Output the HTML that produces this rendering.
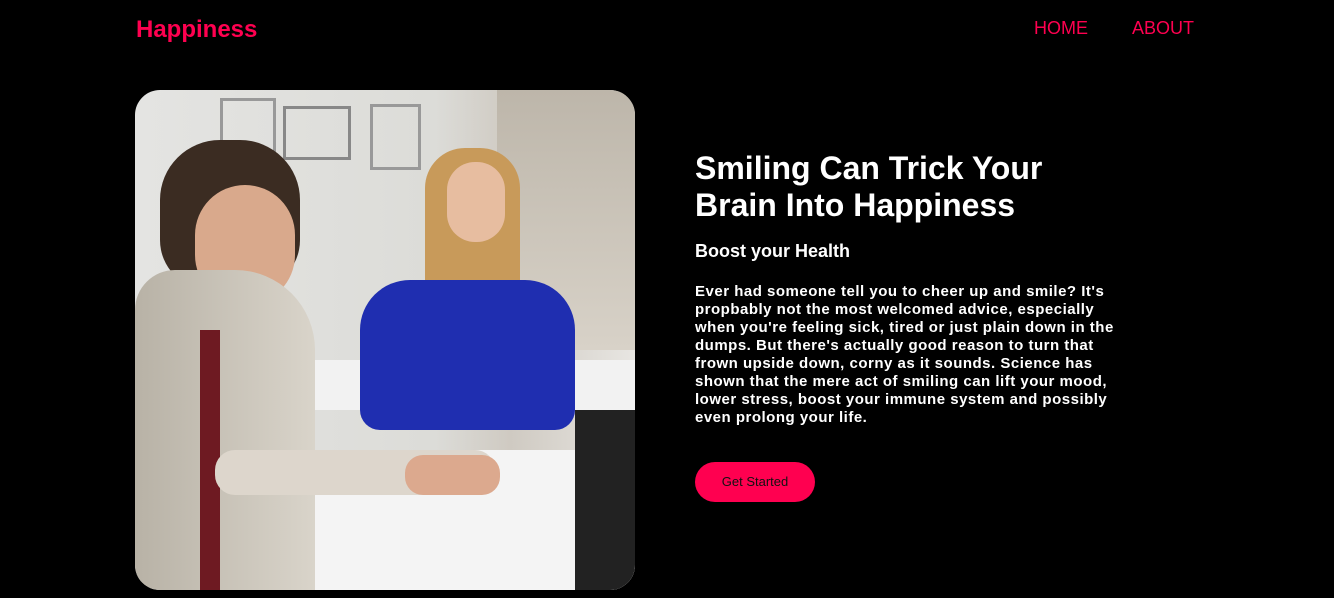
<!DOCTYPE html>
<html><head><style>
body{margin:0;background:#000;width:1334px;height:598px;overflow:hidden;font-family:"Liberation Sans",Arial,sans-serif;position:relative}
.logo{position:absolute;left:136px;top:16px;color:#ff0050;font-weight:bold;font-size:24px}
.nav{position:absolute;top:18px;color:#ff0050;font-size:18px}
.photo{position:absolute;left:135px;top:90px;width:500px;height:500px;border-radius:25px;overflow:hidden;background:linear-gradient(90deg,#e4e4e2 0%,#dcdcd8 60%,#cfcac2 75%,#e8e6e2 100%)}
.photo div{position:absolute}
h1{position:absolute;left:695px;top:150px;margin:0;color:#fff;font-size:32px;line-height:37px;font-weight:bold}
h3{position:absolute;left:695px;top:241px;margin:0;color:#fff;font-size:18px;font-weight:bold}
p{position:absolute;left:695px;top:283px;margin:0;width:430px;color:#fff;font-size:15px;letter-spacing:0.5px;line-height:18px;font-weight:bold}
.btn{position:absolute;left:695px;top:462px;width:120px;height:40px;border-radius:20px;background:#ff0050;color:#111;font-size:13px;text-align:center;line-height:40px}
</style></head><body>
<div class="logo">Happiness</div>
<div class="nav" style="left:1034px">HOME</div>
<div class="nav" style="left:1132px">ABOUT</div>
<div class="photo">
 <div style="left:85px;top:8px;width:50px;height:60px;border:3px solid #999"></div>
 <div style="left:148px;top:16px;width:62px;height:48px;border:3px solid #888"></div>
 <div style="left:235px;top:14px;width:45px;height:60px;border:3px solid #999"></div>
 <div style="left:362px;top:0;width:138px;height:260px;background:linear-gradient(#bdb6aa,#d8d2c8)"></div>
 <div style="left:110px;top:270px;width:390px;height:50px;background:#f2f2f2"></div>
 <div style="left:90px;top:360px;width:410px;height:140px;background:#f4f4f4"></div>
 <div style="left:440px;top:320px;width:60px;height:180px;background:#222"></div>
 <div style="left:290px;top:58px;width:95px;height:190px;border-radius:40px;background:#c89a5a"></div>
 <div style="left:312px;top:72px;width:58px;height:80px;border-radius:28px;background:#e7bda0"></div>
 <div style="left:225px;top:190px;width:215px;height:150px;border-radius:50px 50px 20px 20px;background:#1f2eb0"></div>
 <div style="left:25px;top:50px;width:140px;height:150px;border-radius:60px 60px 50px 50px;background:#3b2c22"></div>
 <div style="left:60px;top:95px;width:100px;height:120px;border-radius:50px;background:#d9a98c"></div>
 <div style="left:0;top:180px;width:180px;height:320px;border-radius:40px 80px 0 0;background:linear-gradient(90deg,#b8b2a6,#d9d4ca)"></div>
 <div style="left:65px;top:240px;width:20px;height:260px;background:#6e1a22"></div>
 <div style="left:80px;top:360px;width:280px;height:45px;border-radius:20px;background:#ddd6cc"></div>
 <div style="left:270px;top:365px;width:95px;height:40px;border-radius:18px;background:#dca98e"></div>
</div>
<h1>Smiling Can Trick Your<br>Brain Into Happiness</h1>
<h3>Boost your Health</h3>
<p>Ever had someone tell you to cheer up and smile? It's propbably not the most welcomed advice, especially when you're feeling sick, tired or just plain down in the dumps. But there's actually good reason to turn that frown upside down, corny as it sounds. Science has shown that the mere act of smiling can lift your mood, lower stress, boost your immune system and possibly even prolong your life.</p>
<div class="btn">Get Started</div>
</body></html>
